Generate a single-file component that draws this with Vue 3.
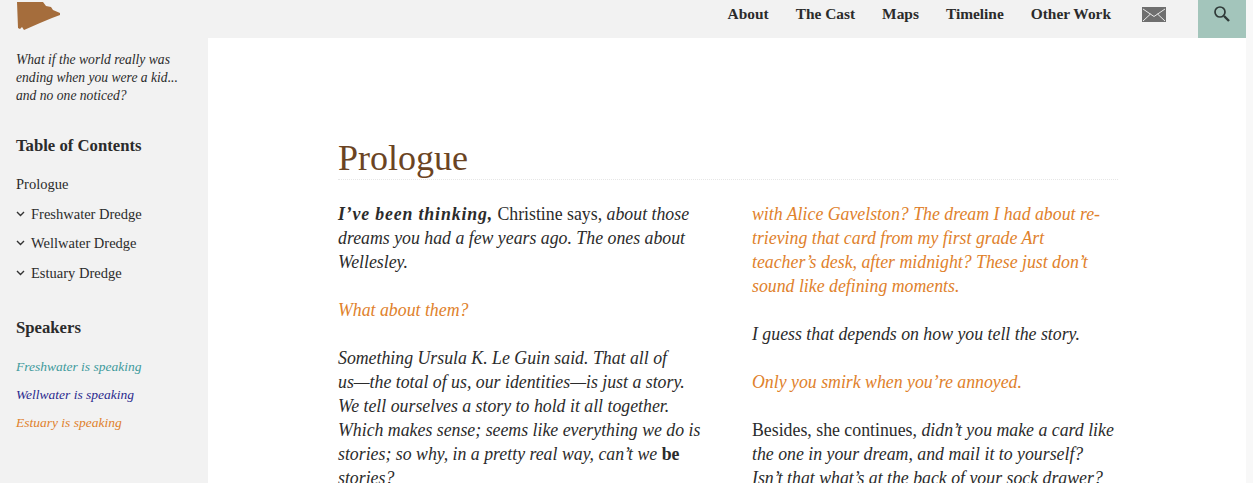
<script setup>
const toc = ['Freshwater Dredge', 'Wellwater Dredge', 'Estuary Dredge']
const speakers = [
  { label: 'Freshwater is speaking', cls: 'fresh' },
  { label: 'Wellwater is speaking', cls: 'well' },
  { label: 'Estuary is speaking', cls: 'estuary' }
]
const nav = ['About', 'The Cast', 'Maps', 'Timeline', 'Other Work']
</script>

<template>
  <div class="page">
    <div class="content">
      <header class="top">
        <svg class="logo" width="46" height="31" viewBox="0 0 46 31">
          <path d="M1 2 L27 2 L30 6 L35 7 L37 10 L44 13 L44 15 L36 18 L24 23 L8 30 L6 27 L4 29 L2 28 Z" fill="#a56d3c" />
        </svg>
        <nav class="nav">
          <a v-for="n in nav" :key="n">{{ n }}</a>
          <svg class="mail" width="24" height="15" viewBox="0 0 24 15">
            <rect width="24" height="15" fill="#6f6f6f" />
            <path d="M1 2 L12 9.5 L23 2 M1 14 L8.5 7 M23 14 L15.5 7" fill="none" stroke="#e8e8e8" stroke-width="1" />
          </svg>
        </nav>
        <div class="search">
          <svg width="18" height="18" viewBox="0 0 18 18">
            <circle cx="7" cy="7" r="5" fill="none" stroke="#2f3a38" stroke-width="1.7" />
            <path d="M11 11 L16 16" stroke="#2f3a38" stroke-width="2.4" />
          </svg>
        </div>
      </header>
      <div class="body">
        <aside class="side">
          <p class="tag">What if the world really was<br />ending when you were a kid...<br />and no one noticed?</p>
          <h3 class="toc-h">Table of Contents</h3>
          <ul class="toc">
            <li>Prologue</li>
            <li v-for="t in toc" :key="t" class="sub">
              <svg width="9" height="6" viewBox="0 0 9 6"><path d="M1 1 L4.5 4.5 L8 1" fill="none" stroke="#333" stroke-width="1.4" /></svg>
              <span>{{ t }}</span>
            </li>
          </ul>
          <h3 class="sp-h">Speakers</h3>
          <ul class="speakers">
            <li v-for="s in speakers" :key="s.cls" :class="s.cls">{{ s.label }}</li>
          </ul>
        </aside>
        <main class="main">
          <h1 class="title">Prologue</h1>
          <div class="cols">
            <div class="col">
              <p><b class="lead"><i>I’ve been thinking,</i></b> Christine says, <i>about those<br />dreams you had a few years ago. The ones about<br />Wellesley.</i></p>
              <p class="or"><i>What about them?</i></p>
              <p><i>Something Ursula K. Le Guin said. That all of<br />us—the total of us, our identities—is just a story.<br />We tell ourselves a story to hold it all together.<br />Which makes sense; seems like everything we do is<br />stories; so why, in a pretty real way, can’t we </i><b>be</b><br /><i>stories?</i></p>
            </div>
            <div class="col">
              <p class="or"><i>with Alice Gavelston? The dream I had about re-<br />trieving that card from my first grade Art<br />teacher’s desk, after midnight? These just don’t<br />sound like defining moments.</i></p>
              <p><i>I guess that depends on how you tell the story.</i></p>
              <p class="or"><i>Only you smirk when you’re annoyed.</i></p>
              <p>Besides, she continues, <i>didn’t you make a card like<br />the one in your dream, and mail it to yourself?<br />Isn’t that what’s at the back of your sock drawer?</i></p>
            </div>
          </div>
        </main>
      </div>
    </div>
    <div class="strip"></div>
  </div>
</template>

<style>
html, body { margin: 0; overflow: hidden; background: #fff; }
</style>

<style scoped>
.page { width: 1253px; height: 483px; overflow: hidden; display: flex; font-family: "Liberation Serif", serif; color: #2b2b2b; background: #fff; }
.content { width: 1246px; flex: none; }
.strip { flex: 1; background: #f8f8f8; }
.top { height: 38px; background: #f2f2f2; display: flex; align-items: flex-start; }
.logo { margin-left: 16px; }
.nav { margin-left: auto; display: flex; align-items: center; gap: 27px; height: 28px; font-size: 15.4px; font-weight: 700; }
.mail { margin-left: 4px; }
.search { width: 48px; height: 38px; margin-left: 32px; background: #a3c5bb; display: flex; justify-content: center; padding-top: 5px; box-sizing: border-box; }
.body { display: flex; height: 445px; }
.side { width: 208px; background: #f2f2f2; padding: 13px 0 0 16px; box-sizing: border-box; }
.tag { margin: 0; font-style: italic; font-size: 13.6px; line-height: 18px; white-space: nowrap; }
.toc-h { margin: 30px 0 0; font-size: 16.7px; line-height: 22px; }
.toc { list-style: none; margin: 13px 0 0; padding: 0; font-size: 14.5px; line-height: 29.7px; }
.sub svg { margin-right: 6px; vertical-align: 2px; }
.sp-h { margin: 28px 0 0; font-size: 16.7px; line-height: 22px; }
.speakers { list-style: none; margin: 14px 0 0; padding: 0; font-style: italic; font-size: 13.5px; line-height: 28px; }
.fresh { color: #3e9a9c; }
.well { color: #2a2a8e; }
.estuary { color: #e0812b; }
.main { flex: 1; padding: 100px 0 0 130px; }
.title { margin: 0; width: 780px; font-size: 36px; font-weight: 400; line-height: 41px; color: #6b4423; border-bottom: 1px dotted #e6e6e6; }
.cols { display: flex; margin-top: 22px; }
.col { width: 414px; font-size: 17.8px; line-height: 24px; }
.col p { margin: 0 0 24px; white-space: nowrap; }
.lead { letter-spacing: 0.85px; }
.or { color: #e0812b; }
</style>
